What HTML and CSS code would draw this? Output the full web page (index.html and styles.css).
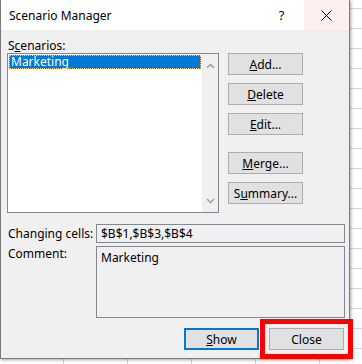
FILE: index.html
```html
<html>
<head>
  <title>Scenario Manager</title>
  <link rel="stylesheet" href="styles.css">
</head>
<body>
  <div class="dialog">
    <div class="titlebar">
      <span class="title">Scenario Manager</span>
      <span class="caption-btn help">?</span>
      <span class="caption-btn close">
        <svg width="11" height="11" viewBox="0 0 11 11"><path d="M0.5 0.5 L10.5 10.5 M10.5 0.5 L0.5 10.5" stroke="#000" stroke-width="1" fill="none"/></svg>
      </span>
    </div>
    <div class="content">
      <div class="label">S<u>c</u>enarios:</div>
      <div class="main">
        <div class="listbox">
          <div class="items">
            <div class="item selected">Marketing</div>
          </div>
          <div class="scrollbar">
            <svg width="9" height="6" viewBox="0 0 9 6"><path d="M1 5 L4.5 1.5 L8 5" stroke="#a3a3a3" stroke-width="1.6" fill="none"/></svg>
            <svg width="9" height="6" viewBox="0 0 9 6"><path d="M1 1 L4.5 4.5 L8 1" stroke="#a3a3a3" stroke-width="1.6" fill="none"/></svg>
          </div>
        </div>
        <div class="actions">
          <button class="btn"><u>A</u>dd...</button>
          <button class="btn"><u>D</u>elete</button>
          <button class="btn"><u>E</u>dit...</button>
          <button class="btn spaced"><u>M</u>erge...</button>
          <button class="btn">S<u>u</u>mmary...</button>
        </div>
      </div>
      <div class="field cells">
        <span class="field-label">Changing cells:</span>
        <div class="box">$B$1,$B$3,$B$4</div>
      </div>
      <div class="field comment">
        <span class="field-label">Comment:</span>
        <div class="box">Marketing</div>
      </div>
      <div class="footer">
        <button class="btn default"><u>S</u>how</button>
        <button class="btn marked">Close</button>
      </div>
    </div>
  </div>
</body>
</html>
```

FILE: styles.css
```css
* {
  box-sizing: border-box;
}
body {
  margin: 0;
  width: 362px;
  height: 364px;
  overflow: hidden;
  font-family: "Noto Sans", sans-serif;
  font-size: 12px;
  color: #000;
  background-color: #fff;
  background-image:
    linear-gradient(#d4d4d4 1px, transparent 1px),
    linear-gradient(90deg, #d4d4d4 1px, transparent 1px);
  background-size: 100% 20px, 64px 100%;
  background-position: 0 8px, 63px 0;
}
.dialog {
  width: 350px;
  background: #f0f0f0;
  border: 1px solid #7a7a7a;
  border-top: none;
  box-shadow: 1px 1px 3px rgba(0, 0, 0, 0.35);
}
.titlebar {
  height: 30px;
  background: #fff;
  display: flex;
  align-items: center;
}
.title {
  flex: 1;
  padding-left: 8px;
  font-size: 12px;
}
.caption-btn {
  width: 45px;
  height: 30px;
  display: flex;
  align-items: center;
  justify-content: center;
}
.help {
  font-size: 13px;
}
.close {
  background: #fff0f0;
}
.content {
  padding: 8px 4px 8px 6px;
}
.label {
  height: 15px;
  line-height: 15px;
  padding-left: 1px;
}
.main {
  display: flex;
  gap: 9px;
}
.listbox {
  width: 212px;
  height: 160px;
  border: 1px solid #828790;
  background: #fff;
  display: flex;
}
.items {
  flex: 1;
  padding: 1px;
}
.item {
  height: 14px;
  line-height: 13px;
  padding-left: 2px;
}
.selected {
  background: #0078d7;
  color: #fff;
  outline: 1px dotted #f3c77a;
  outline-offset: -1px;
}
.scrollbar {
  width: 16px;
  background: #f0f0f0;
  display: flex;
  flex-direction: column;
  justify-content: space-between;
  align-items: center;
  padding: 9px 0 8px;
}
.actions {
  display: flex;
  flex-direction: column;
  gap: 8px;
}
.btn {
  width: 75px;
  height: 22px;
  padding: 0;
  background: #e1e1e1;
  border: 1px solid #adadad;
  font-family: "Noto Sans", sans-serif;
  font-size: 12px;
  color: #000;
}
.spaced {
  margin-top: 9px;
}
.field {
  display: flex;
  padding-left: 1px;
}
.field-label {
  width: 88px;
}
.box {
  width: 249px;
  border: 1px solid #828790;
  padding-left: 4px;
}
.cells {
  margin-top: 11px;
  height: 19px;
  align-items: center;
}
.cells .box {
  height: 19px;
  line-height: 17px;
}
.comment {
  margin-top: 3px;
}
.comment .field-label {
  line-height: 15px;
}
.comment .box {
  height: 72px;
  padding-top: 2px;
}
.footer {
  margin-top: 10px;
  display: flex;
  justify-content: flex-end;
  gap: 10px;
  padding-right: 1px;
}
.default {
  border: 2px solid #0078d7;
}
.marked {
  outline: 5px solid #f00;
  outline-offset: 4px;
}
```
